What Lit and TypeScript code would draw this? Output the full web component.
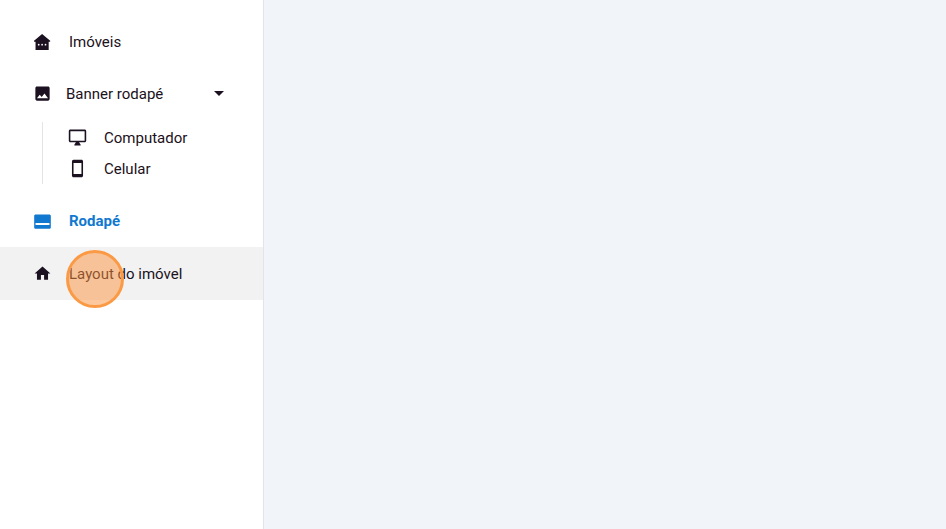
import { LitElement, html, css, svg } from "lit";
import { customElement } from "lit/decorators.js";

const ICONS = {
	houses: svg`<path d="M1.300 11 11.500 2.500 21.700 11v1.400h-1.900V22.800H3.200V12.400H1.300z"/><g fill="#fff"><circle cx="7.200" cy="16" r="1.100"/><circle cx="11.500" cy="16" r="1.100"/><circle cx="15.800" cy="16" r="1.100"/></g>`,
	image: svg`<path d="M21 19V5c0-1.100-.9-2-2-2H5c-1.100 0-2 .9-2 2v14c0 1.100.9 2 2 2h14c1.100 0 2-.9 2-2zM8.500 13.500l2.500 3 3.500-4.500 4.500 6H5l3.500-4.500z"/>`,
	desktop: svg`<path d="M21 2H3c-1.100 0-2 .9-2 2v12c0 1.100.9 2 2 2h7l-2 3v1h8v-1l-2-3h7c1.100 0 2-.9 2-2V4c0-1.100-.9-2-2-2zm0 14H3V4h18v12z"/>`,
	phone: svg`<path d="M17 1.010 7 1c-1.100 0-2 .9-2 2v18c0 1.100.9 2 2 2h10c1.100 0 2-.9 2-2V3c0-1.100-.9-1.990-2-1.990zM17 19H7V5h10v14z"/>`,
	footer: svg`<path fill-rule="evenodd" d="M3.500 3.800h17c1.100 0 2 .9 2 2v16.400c0 1.100-.9 2-2 2h-17c-1.100 0-2-.9-2-2V5.800c0-1.100.9-2 2-2zM3.200 16v2.800h17.600V16z" transform="translate(0 0) scale(1 .88) translate(0 1.400)"/>`,
	home: svg`<path d="M10 20v-6h4v6h5v-8h3L12 3 2 12h3v8z"/>`,
};

@customElement("app-root")
export class AppRoot extends LitElement {
	static styles = css`
		:host {
			display: block;
			height: 529px;
			overflow: hidden;
			font-family: "Roboto", "Liberation Sans", sans-serif;
			font-size: 15px;
			color: #1b1120;
		}
		.page {
			display: flex;
			height: 100%;
			background: #f1f4f9;
		}
		.side {
			box-sizing: border-box;
			width: 264px;
			flex: none;
			padding-top: 16px;
			background: #fff;
			border-right: 1px solid #e2e4e8;
		}
		.row {
			display: flex;
			align-items: center;
			height: 53px;
			padding-left: 33px;
		}
		.row.first {
			height: 51px;
		}
		.row svg {
			width: 19px;
			height: 19px;
			fill: currentColor;
			flex: none;
		}
		.row .label {
			margin-left: 17px;
		}
		.banner .label {
			margin-left: 14px;
		}
		.caret {
			width: 0;
			height: 0;
			margin-left: 51px;
			border-left: 5px solid transparent;
			border-right: 5px solid transparent;
			border-top: 5px solid currentColor;
		}
		.sub {
			display: flex;
			flex-direction: column;
			margin: 2px 0 10px 42px;
			height: 62px;
			border-left: 1px solid #e2e4e8;
			padding-left: 25px;
		}
		.sub div {
			display: flex;
			align-items: center;
			height: 31px;
			gap: 17px;
		}
		.sub svg {
			width: 19px;
			height: 19px;
			fill: currentColor;
		}
		.active {
			color: #1178cf;
			font-weight: 700;
		}
		.hover {
			position: relative;
			background: #f2f2f3;
		}
		.pointer {
			position: absolute;
			left: 66px;
			top: 3px;
			width: 58px;
			height: 58px;
			box-sizing: border-box;
			border-radius: 50%;
			background: rgba(251, 146, 60, 0.5);
			border: 3px solid #fb9a45;
		}
	`;

	icon(name: keyof typeof ICONS) {
		return html`<svg viewBox="0 0 24 24">${ICONS[name]}</svg>`;
	}

	render() {
		return html`
			<div class="page">
				<nav class="side">
					<div class="row first">${this.icon("houses")}<span class="label">Imóveis</span></div>
					<div class="row banner">
						${this.icon("image")}<span class="label">Banner rodapé</span><span class="caret"></span>
					</div>
					<div class="sub">
						<div>${this.icon("desktop")}<span>Computador</span></div>
						<div>${this.icon("phone")}<span>Celular</span></div>
					</div>
					<div class="row active">${this.icon("footer")}<span class="label">Rodapé</span></div>
					<div class="row hover">
						${this.icon("home")}<span class="label">Layout do imóvel</span>
						<span class="pointer"></span>
					</div>
				</nav>
			</div>
		`;
	}
}
